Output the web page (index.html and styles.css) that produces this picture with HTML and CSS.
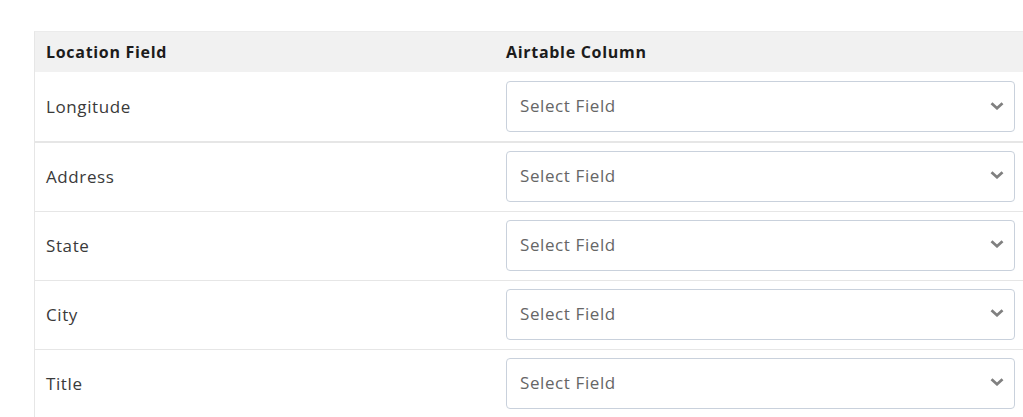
FILE: index.html
```html
<!DOCTYPE html>
<html lang="en">
<head>
<meta charset="utf-8">
<title>Field Mapping</title>
<link rel="stylesheet" href="styles.css">
</head>
<body>
<div class="page">
  <div class="map-table">
    <div class="row head">
      <div class="cell">Location Field</div>
      <div class="cell">Airtable Column</div>
    </div>
    <div class="row first">
      <div class="cell label">Longitude</div>
      <div class="cell"><div class="select"><span>Select Field</span><svg class="chev" viewBox="0 0 14 8" width="14" height="8"><polyline points="1.5,1.3 7,6.2 12.5,1.3"/></svg></div></div>
    </div>
    <div class="row">
      <div class="cell label">Address</div>
      <div class="cell"><div class="select"><span>Select Field</span><svg class="chev" viewBox="0 0 14 8" width="14" height="8"><polyline points="1.5,1.3 7,6.2 12.5,1.3"/></svg></div></div>
    </div>
    <div class="row">
      <div class="cell label">State</div>
      <div class="cell"><div class="select"><span>Select Field</span><svg class="chev" viewBox="0 0 14 8" width="14" height="8"><polyline points="1.5,1.3 7,6.2 12.5,1.3"/></svg></div></div>
    </div>
    <div class="row">
      <div class="cell label">City</div>
      <div class="cell"><div class="select"><span>Select Field</span><svg class="chev" viewBox="0 0 14 8" width="14" height="8"><polyline points="1.5,1.3 7,6.2 12.5,1.3"/></svg></div></div>
    </div>
    <div class="row">
      <div class="cell label">Title</div>
      <div class="cell"><div class="select"><span>Select Field</span><svg class="chev" viewBox="0 0 14 8" width="14" height="8"><polyline points="1.5,1.3 7,6.2 12.5,1.3"/></svg></div></div>
    </div>
  </div>
</div>
</body>
</html>
```

FILE: styles.css
```css
html, body {
  margin: 0;
  padding: 0;
  background: #ffffff;
  overflow: hidden;
}
body {
  font-family: "Open Sans", "Noto Sans", sans-serif;
  color: #333333;
}
.page {
  padding: 31px 0 0 34px;
}
.map-table {
  width: 1000px;
  border-left: 1px solid #e6e6e6;
  border-top: 1px solid #ebebeb;
}
.row {
  display: grid;
  grid-template-columns: 460px 539px;
  align-items: center;
  border-bottom: 1px solid #e6e6e6;
  height: 66px;
  padding-bottom: 2px;
}
.row.head {
  height: 40px;
  padding-bottom: 0;
  background: #f1f1f1;
  border-bottom: none;
  font-weight: 700;
  font-size: 16px;
  letter-spacing: 0.7px;
  color: #1c1c1c;
}
.row.first {
  height: 69px;
  padding-bottom: 0;
  border-bottom: 2px solid #e6e6e6;
}
.cell {
  padding: 0 0 0 11px;
}
.label {
  font-size: 17px;
  letter-spacing: 0.6px;
  color: #3a3a3a;
}
.select {
  box-sizing: border-box;
  width: 509px;
  height: 51px;
  border: 1px solid #c9d1dc;
  border-radius: 4px;
  display: flex;
  align-items: center;
  justify-content: space-between;
  padding: 0 10px 2px 13px;
  font-size: 17px;
  letter-spacing: 0.6px;
  color: #666666;
  background: #fff;
}
.chev {
  fill: none;
  stroke: #808080;
  stroke-width: 2.8;
}
```
